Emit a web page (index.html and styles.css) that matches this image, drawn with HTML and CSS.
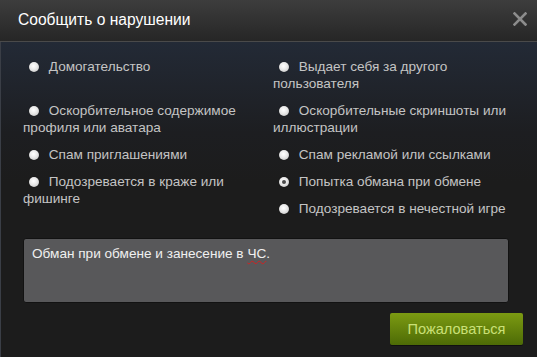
FILE: index.html
```html
<!DOCTYPE html>
<html lang="ru">
<head>
<meta charset="utf-8">
<link rel="stylesheet" href="styles.css">
</head>
<body>
<div class="dialog">
  <div class="header">
    <div class="title">Сообщить о нарушении</div>
    <svg class="close" width="14" height="14" viewBox="0 0 14 14"><path d="M1.5 1.5 L12.5 12.5 M12.5 1.5 L1.5 12.5" stroke="#8c8c8c" stroke-width="2.6" stroke-linecap="square"/></svg>
  </div>
  <div class="body">
    <div class="options">
      <label class="opt"><span class="radio"></span> Домогательство</label>
      <label class="opt"><span class="radio"></span> Выдает себя за другого пользователя</label>
      <label class="opt"><span class="radio"></span> Оскорбительное содержимое профиля или аватара</label>
      <label class="opt"><span class="radio"></span> Оскорбительные скриншоты или иллюстрации</label>
      <label class="opt"><span class="radio"></span> Спам приглашениями</label>
      <label class="opt"><span class="radio"></span> Спам рекламой или ссылками</label>
      <label class="opt span2"><span class="radio"></span> Подозревается в краже или фишинге</label>
      <label class="opt"><span class="radio checked"></span> Попытка обмана при обмене</label>
      <label class="opt col2"><span class="radio"></span> Подозревается в нечестной игре</label>
    </div>
    <div class="textarea">Обман при обмене и занесение в <span class="spell">ЧС</span>.</div>
    <div class="actions">
      <button class="btn">Пожаловаться</button>
    </div>
  </div>
</div>
</body>
</html>
```
FILE: styles.css
```css
html, body {
  margin: 0;
  padding: 0;
  background: #1c1c1c;
}
.dialog {
  width: 537px;
  height: 357px;
  display: flex;
  flex-direction: column;
  font-family: "Liberation Sans", Arial, sans-serif;
  overflow: hidden;
}
.header {
  height: 42px;
  flex: none;
  display: flex;
  align-items: center;
  justify-content: space-between;
  padding: 0 10px 0 18px;
  box-sizing: border-box;
  background: linear-gradient(#3d3d3d, #262626);
  border-bottom: 1px solid #4a4a4a;
}
.title {
  color: #ffffff;
  font-size: 15.6px;
  margin-top: -2px;
}
.close {
  margin-top: -4px;
}
.body {
  flex: 1;
  border-left: 1px solid #3a3e46;
  background: linear-gradient(#232a36 0px, #1d1e21 90px, #1c1c1c 140px);
  padding: 16px 10px 0 22px;
  display: flex;
  flex-direction: column;
}
.options {
  display: grid;
  grid-template-columns: 250px 1fr;
  row-gap: 10px;
  color: #c4c4c4;
  font-size: 13.6px;
  line-height: 17px;
}
.opt {
  display: block;
}
.span2 {
  grid-row: span 2;
}
.col2 {
  grid-column: 2;
}
.radio {
  display: inline-block;
  width: 10px;
  height: 10px;
  border-radius: 50%;
  margin: 0 6px 0 6px;
  vertical-align: -1px;
  background: radial-gradient(circle at 45% 40%, #ffffff 0, #e8e8e8 45%, #b8b8b8 100%);
  box-shadow: 0 0 1px rgba(0,0,0,0.6);
  position: relative;
}
.radio.checked::after {
  content: "";
  position: absolute;
  left: 3px;
  top: 3px;
  width: 4px;
  height: 4px;
  border-radius: 50%;
  background: #4a4a4a;
}
.textarea {
  margin: 21px 18px 0 0;
  height: 49px;
  background: #58585a;
  border: 1px solid #121212;
  border-radius: 3px;
  padding: 6px 8px 8px;
  color: #f0f0f0;
  font-size: 13.6px;
  line-height: 17px;
}
.spell {
  text-decoration: underline wavy #d02020;
  text-decoration-thickness: 1px;
  text-underline-offset: 2px;
}
.actions {
  display: flex;
  justify-content: flex-end;
  margin-top: 10px;
  margin-right: 4px;
}
.btn {
  width: 133px;
  height: 32px;
  border: none;
  border-radius: 2px;
  background: linear-gradient(#7c9b12, #4d6b06);
  color: #cae077;
  font-family: "Liberation Sans", Arial, sans-serif;
  font-size: 14.6px;
  padding: 0;
  box-shadow: 0 1px 0 rgba(0,0,0,0.4);
}
```
